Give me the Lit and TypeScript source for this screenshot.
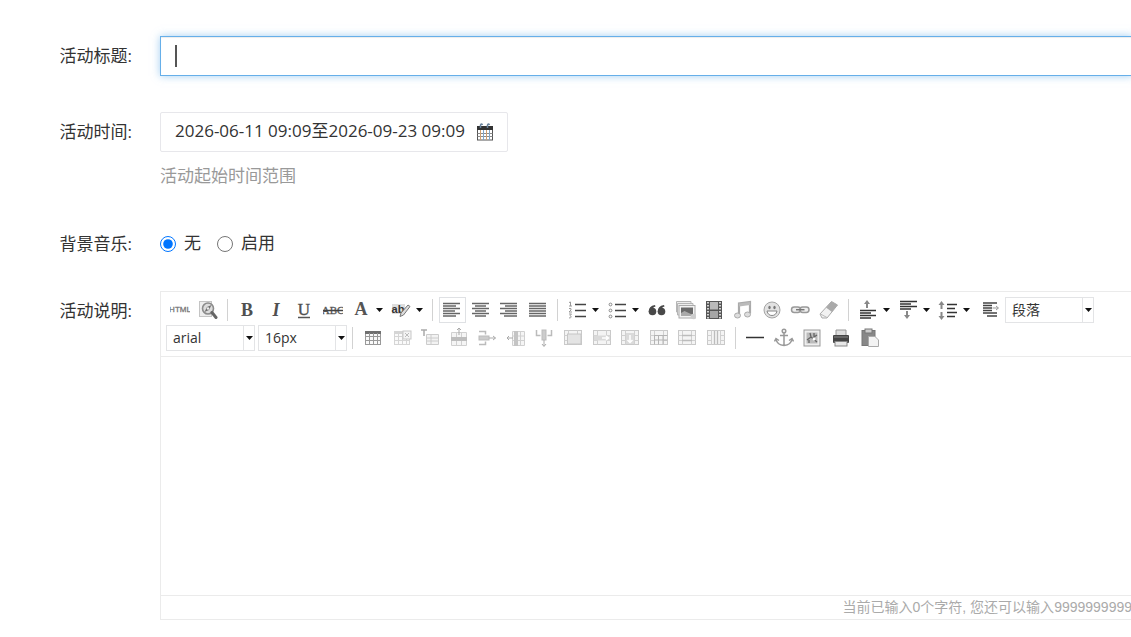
import { LitElement, html, svg, css, nothing, TemplateResult } from "lit";
import { customElement, property, state } from "lit/decorators.js";

const lines = (y0: number, spans: number[][], color = "#666") =>
  spans.map(([x1, x2], i) => svg`<path d="M${x1} ${y0 + i * 2.5}H${x2}" stroke=${color} stroke-width="1.5"/>`);

const letter = (ch: string, style = "") =>
  svg`<text x="10" y="15.500" text-anchor="middle" font-family="Liberation Serif, serif" font-size="18" fill="#505050" style=${style || nothing}>${ch}</text>`;

// Shared table grid, drawn in a light or a dark tone.
const grid = (c: string, head = c) => svg`
  <rect x="2.500" y="3.500" width="15" height="13" fill="#fafafa" stroke=${c}/>
  <path d="M2 4.500H18" stroke=${head} stroke-width="3"/>
  <path d="M2.500 8.500H17.500M2.500 12.500H17.500M6.500 5V16.500M10.500 5V16.500M14.500 5V16.500" stroke=${c} fill="none"/>`;

const frame = (inner: TemplateResult) => svg`
  <rect x="1.500" y="2.500" width="17" height="14" fill="#f4f4f4" stroke="#c9c9c9"/>
  <path d="M5.500 2.500V16.500M14.500 2.500V16.500M1.500 7.500H5.500M1.500 12.500H5.500M14.500 7.500H18.500M14.500 12.500H18.500" stroke="#d0d0d0" fill="none"/>${inner}`;

const arrowUp = (x: number, y: number, c = "#888") =>
  svg`<path d="M${x} ${y}l3 4h-2v4h-2v-4h-2z" fill=${c}/>`;
const arrowDown = (x: number, y: number, c = "#888") =>
  svg`<path d="M${x} ${y}l3 -4h-2v-4h-2v4h-2z" fill=${c}/>`;

const icons: Record<string, TemplateResult | TemplateResult[]> = {
  source: svg`<text x="10" y="12" text-anchor="middle" font-family="Liberation Sans, sans-serif" font-size="8" fill="#777" stroke="#777" stroke-width=".3">HTML</text>`,
  preview: svg`<rect x="1.500" y="1.500" width="12" height="15" fill="#ededed" stroke="#c4c4c4"/>
    <circle cx="10" cy="8.500" r="5.500" fill="#dcdcdc" stroke="#8c8c8c" stroke-width="1.600"/>
    <path d="M6.500 12L9 7L13.500 5L11 10Z" fill="#707070"/><circle cx="10" cy="8.500" r="1.200" fill="#eee"/>
    <path d="M14 12.500L18 17.500" stroke="#666" stroke-width="3" stroke-linecap="round"/>`,
  bold: letter("B", "font-weight:bold"),
  italic: letter("I", "font-weight:bold;font-style:italic"),
  underline: svg`<text x="10" y="14.500" text-anchor="middle" font-family="Liberation Serif, serif" font-size="17" fill="#505050" stroke="#505050" stroke-width=".4">U</text><path d="M4 17.500H16" stroke="#555" stroke-width="1.500"/>`,
  strike: svg`<text x="10" y="14" text-anchor="middle" font-family="Liberation Serif, serif" font-size="11" fill="#555" stroke="#555" stroke-width=".3">ABC</text><path d="M0 10.500H20" stroke="#444" stroke-width="1.500"/>`,
  color: svg`<text x="10" y="15" text-anchor="middle" font-family="Liberation Serif, serif" font-size="18" font-weight="bold" fill="#555">A</text>`,
  highlight: svg`<rect x="1" y="4" width="13" height="10" fill="#dedede"/>
    <text x="7" y="13" text-anchor="middle" font-family="Liberation Sans, sans-serif" font-size="11" font-weight="bold" fill="#333">ab</text>
    <path d="M9 16.500L10 13L17 5L19 6.500L12.500 15Z" fill="#ddd" stroke="#777"/>`,
  left: lines(3.5, [[1, 18], [1, 14], [1, 18], [1, 13], [1, 18], [1, 14]]),
  center: lines(3.5, [[1, 18], [4, 15], [1, 18], [4, 15], [1, 18], [4, 15]]),
  right: lines(3.5, [[1, 18], [6, 18], [1, 18], [6, 18], [1, 18], [5, 18]]),
  justify: lines(3.5, [[1, 18], [1, 18], [1, 18], [1, 18], [1, 18], [1, 18]]),
  ol: svg`<path d="M8 4.500H19M8 10.500H19M8 16.500H19" stroke="#444" stroke-width="1.400"/>
    <path d="M2 2.500L3.500 2V6M2 6H5M2 8.500Q5 8 4 10L2 12H5M2 14H4.500L3 15.500Q6 17.500 2 18" stroke="#999" fill="none"/>`,
  ul: svg`<path d="M8 4.500H19M8 10.500H19M8 16.500H19" stroke="#444" stroke-width="1.400"/>
    <g fill="#fff" stroke="#888"><circle cx="3.500" cy="4.500" r="1.400"/><circle cx="3.500" cy="10.500" r="1.400"/><circle cx="3.500" cy="16.500" r="1.400"/></g>`,
  quote: svg`<g fill="#484848"><circle cx="5.500" cy="11.500" r="3.800"/><path d="M1.700 12Q1.500 6 8 5L8.500 6.500Q5.500 7 5.500 10Z"/>
    <circle cx="14.500" cy="11.500" r="3.800"/><path d="M10.700 12Q10.500 6 17 5L17.500 6.500Q14.500 7 14.500 10Z"/></g>`,
  image: svg`<path d="M0.500 1.500H15V12H0.500Z" fill="#eee" stroke="#b5b5b5"/><path d="M1.500 3.500H17V15H1.500Z" fill="#eee" stroke="#b5b5b5"/>
    <rect x="3" y="5.500" width="16" height="12.500" fill="#f2f2f2" stroke="#aaa"/><rect x="5" y="7.500" width="12" height="8.500" fill="#6a6a6a"/>
    <path d="M5 16V13L8.500 11L17 15V16Z" fill="#aaa"/><circle cx="17.500" cy="16.500" r="2.800" fill="#ccc"/>`,
  video: svg`<rect x="2" y="1" width="16" height="18" fill="#555"/><rect x="6" y="2" width="8" height="7.500" fill="#b9b9b9"/><rect x="6" y="11" width="8" height="7" fill="#a6a6a6"/>
    <path d="M4 2V19M16 2V19" stroke="#fff" stroke-width="1.500" stroke-dasharray="1.500 1.500"/>`,
  music: svg`<path d="M6 15V3.500L17 2V13.500" fill="none" stroke="#aaa" stroke-width="2.200"/><path d="M6 5L17 3.500" stroke="#bbb" stroke-width="3"/>
    <ellipse cx="4.500" cy="15.500" rx="3" ry="2.500" fill="#ddd" stroke="#aaa"/><ellipse cx="14.500" cy="14.500" rx="3" ry="2.500" fill="#ddd" stroke="#aaa"/>`,
  smile: svg`<circle cx="10" cy="10" r="8" fill="#e2e2e2" stroke="#a5a5a5"/><ellipse cx="7.500" cy="7.500" rx="1.200" ry="1.800" fill="#777"/><ellipse cx="12.500" cy="7.500" rx="1.200" ry="1.800" fill="#777"/>
    <path d="M5 11H15Q14 15.500 10 15.500T5 11Z" fill="#fff" stroke="#888"/>`,
  link: svg`<rect x="1.500" y="7" width="9" height="5.500" rx="2.700" fill="#eee" stroke="#999" stroke-width="1.500"/><rect x="10" y="7" width="9" height="5.500" rx="2.700" fill="#eee" stroke="#999" stroke-width="1.500"/>
    <path d="M6 9.700H14.500" stroke="#777" stroke-width="1.500"/>`,
  eraser: svg`<path d="M1 14L12.500 1.500L18.500 5L8 18H3Z" fill="#f2f2f2" stroke="#aaa"/><path d="M7 7.500L12.500 1.500L18.500 5L13 12Z" fill="#aaa"/><path d="M1.500 14L8 17.500" stroke="#bbb"/>`,
  before: svg`${arrowUp(9, 0)}<path d="M2 10.500H18M2 13H13M2 15.500H18M2 18H13" stroke="#333" stroke-width="1.500"/>`,
  after: svg`<path d="M2 1.500H19M2 4H13M2 6.500H19M2 9H13" stroke="#333" stroke-width="1.500"/>${arrowDown(9, 19)}`,
  height: svg`${arrowUp(3.5, 1)}${arrowDown(3.5, 20)}<path d="M9 4.500H19M9 8.500H17M9 12.500H19M9 16.500H17" stroke="#333" stroke-width="1.500"/>`,
  indent: svg`<path d="M3 3H17M3 5.500H12M3 8H12M3 10.500H12M3 13H17M7 16H17" stroke="#444" stroke-width="1.600"/><path d="M12.500 8H18M16 6L18.500 8L16 10" fill="none" stroke="#999"/>`,
  table: grid("#999", "#707070"),
  deltable: svg`${grid("#d5d5d5")}<rect x="11" y="3" width="8" height="8" fill="#f4f4f4" stroke="#c8c8c8"/><path d="M13 5L17 9M17 5L13 9" stroke="#bbb"/>`,
  caption: svg`<path d="M1 2H7M4 2V8" stroke="#aaa" stroke-width="1.500"/><path d="M6.500 6.500H18.500V16.500H6.500ZM6.500 10H18.500M6.500 13H18.500M11 6.500V16.500" fill="#f3f3f3" stroke="#ccc"/>`,
  row: svg`<path d="M2.500 4.500H17.500V17.500H2.500ZM7.500 4.500V17.500M12.500 4.500V17.500" fill="#f5f5f5" stroke="#d0d0d0"/><rect x="2" y="9" width="16" height="4" fill="#bdbdbd"/><path d="M10 7V0M8 2L10 0L12 2" fill="none" stroke="#aaa"/>`,
  delrow: svg`<path d="M2 3.500H8.500V6.500M2 16.500H8.500V13.500" fill="none" stroke="#bbb" stroke-width="1.500"/><rect x="2" y="8" width="10" height="4" fill="#ccc" stroke="#bbb"/><path d="M12 10H18.500M16 8L18.500 10L16 12" fill="none" stroke="#aaa"/>`,
  col: svg`<path d="M6.500 3.500H18.500V17.500H6.500ZM6.500 8H18.500M6.500 12.500H18.500M14.500 3.500V17.500" fill="#f5f5f5" stroke="#d0d0d0"/><rect x="8" y="3" width="4" height="15" fill="#c4c4c4"/><path d="M7 10H1M3 8L1 10L3 12" fill="none" stroke="#aaa"/>`,
  delcol: svg`<path d="M2.500 2V7.500H6.500M17.500 2V7.500H13.500" fill="none" stroke="#bbb" stroke-width="1.500"/><rect x="8" y="2" width="4" height="10" fill="#ccc" stroke="#bbb"/><path d="M10 12V18M8 16L10 18.500L12 16" fill="none" stroke="#aaa"/>`,
  merge: frame(svg`<rect x="4.500" y="6" width="13.500" height="10" fill="#e4e4e4" stroke="#c6c6c6"/>`),
  mergeright: frame(svg`<rect x="2" y="7.500" width="16" height="5" fill="#dadada"/><path d="M10 10H16M14 8L16.500 10L14 12" stroke="#fff" stroke-width="1.500" fill="none"/>`),
  mergedown: frame(svg`<rect x="6" y="5" width="8" height="11" fill="#dadada"/><path d="M10 7V14M7.500 12L10 14.500L12.500 12" stroke="#fff" stroke-width="1.500" fill="none"/>`),
  split: frame(svg`<path d="M5.500 7.500H18.500M5.500 12H18.500M9.500 7V16.500M14 7V16.500M5.500 7V16.500" stroke="#b4b4b4" fill="none"/>`),
  splitrow: frame(svg`<path d="M5 7.500H15M5 12.500H15" stroke="#bcbcbc" stroke-width="1.500"/>`),
  splitcol: frame(svg`<path d="M8.500 3V16M11.500 3V16" stroke="#bcbcbc" stroke-width="1.300"/>`),
  rule: svg`<path d="M1 9.500H19" stroke="#333" stroke-width="1.500"/>`,
  anchor: svg`<g fill="none" stroke="#999" stroke-width="1.500"><circle cx="10" cy="3" r="1.800"/><path d="M10 5V17.500M6 7.500H14M2 11Q3 17 10 17.500Q17 17 18 11M0.500 13.500L2 10.500L5 12.500M19.500 13.500L18 10.500L15 12.500"/></g>`,
  map: svg`<rect x="2" y="2" width="16" height="16" fill="#eee" stroke="#999"/><rect x="4.500" y="4.500" width="11" height="11" fill="#bbb"/><path d="M5 12L9 9L8 5M9 9L15 14M12 5V9L15 7M7 12V15" stroke="#666" stroke-width="1.300" fill="none"/><circle cx="12" cy="11" r="1.500" fill="#fff"/>`,
  print: svg`<path d="M5 2H15V9H5Z" fill="#ddd" stroke="#999"/><rect x="2" y="7" width="16" height="8" rx="1" fill="#444"/><path d="M3 9H17" stroke="#888"/><rect x="4" y="13.500" width="12" height="4.500" fill="#e8e8e8" stroke="#888"/>`,
  paste: svg`<rect x="2" y="2.500" width="13" height="15" fill="#888" stroke="#777"/><rect x="5" y="1" width="7" height="4" fill="#ccc" stroke="#777"/><path d="M8.500 8.500H15L18.500 12V18.500H8.500Z" fill="#f3f3f3" stroke="#aaa"/>`,
};

interface Tool { icon: string; label: string; menu?: boolean; active?: boolean; off?: boolean }

const t = (icon: string, label: string, extra: Partial<Tool> = {}): Tool => ({ icon, label, ...extra });
const menu = { menu: true };
const off = { off: true };

const sourceTools = [t("source", "源代码"), t("preview", "预览")];
const fontTools = [t("bold", "加粗"), t("italic", "斜体"), t("underline", "下划线"), t("strike", "删除线")];
const colorTools = [t("color", "字体颜色", menu), t("highlight", "背景色", menu)];
const alignTools = [t("left", "居左对齐", { active: true }), t("center", "居中对齐"), t("right", "居右对齐"), t("justify", "两端对齐")];
const listTools = [t("ol", "有序列表", menu), t("ul", "无序列表", menu)];
const mediaTools = [t("quote", "引用"), t("image", "图片"), t("video", "视频"), t("music", "音乐"), t("smile", "表情"), t("link", "超链接"), t("eraser", "清除格式")];
const spaceTools = [t("before", "段前距", menu), t("after", "段后距", menu), t("height", "行间距", menu)];
const indentTools = [t("indent", "首行缩进")];
const tableTools = [
  t("table", "插入表格"), t("deltable", "删除表格", off), t("caption", "表格前插入行", off), t("row", "前插入行", off),
  t("delrow", "删除行", off), t("col", "前插入列", off), t("delcol", "删除列", off), t("merge", "合并单元格", off),
  t("mergeright", "右合并单元格", off), t("mergedown", "下合并单元格", off), t("split", "完全拆分单元格", off),
  t("splitrow", "拆分成行", off), t("splitcol", "拆分成列", off),
];
const pageTools = [t("rule", "分隔线"), t("anchor", "锚点"), t("map", "地图"), t("print", "打印"), t("paste", "粘贴")];

@customElement("rich-editor")
export class RichEditor extends LitElement {
  static styles = css`
    :host { display: block; border: 1px solid #ebebeb; background: #fff; color: #333; }
    .toolbar { padding: 4px 5px; border-bottom: 1px solid #ebebeb; }
    .row { display: flex; align-items: center; height: 28px; }
    .group { display: flex; flex: none; }
    .group > button { flex: 1 1 0; }
    .pair { width: 56px; }
    .quad { width: 114px; }
    .media { width: 200px; }
    .table { width: 371px; padding-left: 1px; }
    .page { width: 143px; }
    .menus > button { flex: none; width: 40px; justify-content: flex-start; padding-left: 4px; }
    .single { width: 31px; }
    button {
      display: flex; align-items: center; justify-content: center;
      box-sizing: border-box; min-width: 0; height: 26px; padding: 0;
      border: 0; background: none; cursor: pointer;
    }
    button:disabled { cursor: default; }
    .active { position: relative; }
    .active::before { content: ""; position: absolute; inset: 0 1px; border: 1px solid #dfe1e4; }
    .icon { flex: none; width: 20px; height: 20px; }
    .caret { flex: none; width: 7px; height: 4px; margin-left: 5px; fill: #111; }
    .sep { flex: none; width: 1px; height: 22px; margin: 0 5px; background: #d2d2d2; }
    .pick { position: relative; flex: none; width: 89px; height: 26px; margin-right: 3px; }
    .pick:has(+ .sep) { margin-right: 0; }
    select {
      display: block; appearance: none; box-sizing: border-box; width: 100%; height: 100%; padding: 0 16px 2px 6px;
      border: 1px solid #e3e4e6; border-radius: 0; background: #fff; color: #333;
      font: 14px "Open Sans", "Noto Sans CJK SC", sans-serif;
    }
    .drop {
      position: absolute; right: 1px; top: 1px; bottom: 1px; width: 10px;
      display: flex; align-items: center; justify-content: center;
      border-left: 1px solid #e3e4e6; pointer-events: none;
    }
    .drop .caret { margin: 0; }
    textarea {
      display: block; box-sizing: border-box; width: 100%; height: 238px; padding: 8px;
      border: 0; outline: 0; resize: none; font: 16px "Liberation Sans", "Noto Sans CJK SC", sans-serif;
    }
    .status {
      border-top: 1px solid #ebebeb; text-align: right; white-space: nowrap;
      color: #aaa; font: 14px/23px "Liberation Sans", "Noto Sans CJK SC", sans-serif;
    }
  `;

  @state() private count = 0;

  private caret = () => html`<svg class="caret" viewBox="0 0 7 4" aria-hidden="true"><path d="M0 0H7L3.500 4Z" /></svg>`;

  private group = (kind: string, tools: Tool[]) => html`
    <div class="group ${kind}">
      ${tools.map((tool) => html`
        <button type="button" class=${tool.active ? "active" : ""} title=${tool.label} aria-label=${tool.label} ?disabled=${tool.off}>
          <svg class="icon" viewBox="0 0 20 20" aria-hidden="true">${icons[tool.icon]}</svg>
          ${tool.menu ? this.caret() : nothing}
        </button>`)}
    </div>`;

  private pick = (label: string, options: string[]) => html`
    <div class="pick">
      <select aria-label=${label}>${options.map((o) => html`<option>${o}</option>`)}</select>
      <span class="drop">${this.caret()}</span>
    </div>`;

  render() {
    const sep = html`<span class="sep"></span>`;
    return html`
      <div class="toolbar" role="toolbar">
        <div class="row">
          ${this.group("pair", sourceTools)}${sep}
          ${this.group("quad", fontTools)}${this.group("menus", colorTools)}${sep}
          ${this.group("quad", alignTools)}${sep}
          ${this.group("menus", listTools)}${this.group("media", mediaTools)}${sep}
          ${this.group("menus", spaceTools)}${this.group("single", indentTools)}
          ${this.pick("段落格式", ["段落"])}
        </div>
        <div class="row">
          ${this.pick("字体", ["arial"])}${this.pick("字号", ["16px"])}${sep}
          ${this.group("table", tableTools)}${sep}
          ${this.group("page", pageTools)}
        </div>
      </div>
      <textarea aria-label="活动说明" @input=${(e: Event) => (this.count = (e.target as HTMLTextAreaElement).value.length)}></textarea>
      <div class="status">当前已输入${this.count}个字符, 您还可以输入${9999999999 - this.count}</div>
    `;
  }
}

@customElement("form-row")
export class FormRow extends LitElement {
  static styles = css`
    :host { display: flex; align-items: flex-start; }
    .label { flex: none; box-sizing: border-box; width: 160px; padding-right: 28px; text-align: right; line-height: 40px; }
    .field { flex: 1; min-width: 0; }
  `;

  @property() label = "";

  render() {
    return html`<div class="label">${this.label}:</div><div class="field"><slot></slot></div>`;
  }
}

@customElement("app-root")
export class AppRoot extends LitElement {
  static styles = css`
    :host {
      display: block; overflow: hidden; background: #fff; color: #333;
      font: 17px/24px "Open Sans", "Noto Sans CJK SC", sans-serif;
    }
    form { width: calc(100% + 2px); padding: 36px 0 16px; }
    form-row { margin-bottom: 36px; }
    .compact { margin-bottom: 27px; }
    .last { margin-bottom: 0; }
    .title { position: relative; }
    .text {
      display: block; box-sizing: border-box; width: 100%; height: 40px; padding: 0 15px;
      border: 1px solid #66afe9; border-radius: 0; outline: 0; font: inherit; color: inherit; caret-color: transparent;
      box-shadow: inset 0 1px 1px rgba(0, 0, 0, 0.075), 0 0 8px rgba(102, 175, 233, 0.6);
    }
    .cursor { position: absolute; left: 15px; top: 9px; width: 2px; height: 22px; background: #555; pointer-events: none; }
    .range {
      display: flex; align-items: center; justify-content: space-between; box-sizing: border-box;
      min-width: 348px; height: 40px; padding: 0 13px 0 14px;
      border: 1px solid #e7e7eb; border-radius: 2px; background: #fff; font: inherit; color: inherit; cursor: pointer;
    }
    .range span, .radios span { line-height: 38px; padding-bottom: 2px; }
    .calendar { width: 18px; height: 18px; }
    .help { margin: 12px 0 0; line-height: 24px; color: #999; }
    .radios { display: flex; gap: 16px; height: 40px; }
    .radios label { display: flex; align-items: center; gap: 8px; }
    .radios input { width: 16px; height: 16px; margin: 0; accent-color: #0075ff; }
  `;

  render() {
    return html`
      <form @submit=${(e: Event) => e.preventDefault()}>
        <form-row label="活动标题">
          <div class="title">
            <input class="text" type="text" name="title" aria-label="活动标题" />
            <span class="cursor"></span>
          </div>
        </form-row>
        <form-row label="活动时间">
          <button class="range" type="button">
            <span>2026-06-11 09:09至2026-09-23 09:09</span>
            <svg class="calendar" viewBox="0 0 18 18" aria-hidden="true">
              <rect x="1.500" y="3.500" width="15" height="13.500" fill="#fff" stroke="#555" />
              <path d="M1 3H17V7H1Z" fill="#333" />
              <path d="M1.500 10.500H16.500M1.500 13.500H16.500" stroke="#8a8a8a" />
              <path d="M4.500 7V17M10.500 7V17" stroke="#d0a070" /><path d="M7.500 7V17M13.500 7V17" stroke="#7fa6c8" />
              <path d="M4.500 5V2Q5.500 0 6.500 2M11.500 5V2Q12.500 0 13.500 2" fill="none" stroke="#69839c" stroke-width="1.500" />
            </svg>
          </button>
          <p class="help">活动起始时间范围</p>
        </form-row>
        <form-row class="compact" label="背景音乐">
          <div class="radios">
            <label><input type="radio" name="music" value="off" checked /><span>无</span></label>
            <label><input type="radio" name="music" value="on" /><span>启用</span></label>
          </div>
        </form-row>
        <form-row class="last" label="活动说明">
          <rich-editor></rich-editor>
        </form-row>
      </form>
    `;
  }
}
